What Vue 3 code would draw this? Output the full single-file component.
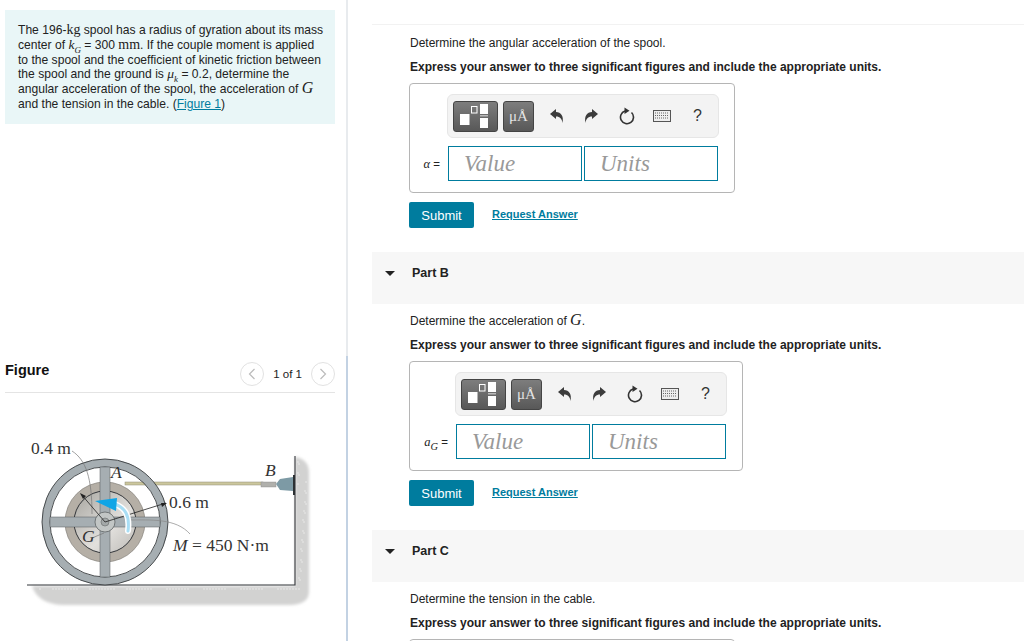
<template>
  <div class="page">
    <aside class="left">
      <div class="problem">
        <span class="line">The 196-<span class="cm">kg</span> spool has a radius of gyration about its mass</span>
        <span class="line">center of <i class="math">k<sub>G</sub></i> = 300 <span class="cm">mm</span>. If the couple moment is applied</span>
        <span class="line">to the spool and the coefficient of kinetic friction between</span>
        <span class="line">the spool and the ground is <i class="math">μ<sub>k</sub></i> = 0.2, determine the</span>
        <span class="line">angular acceleration of the spool, the acceleration of <i class="math big">G</i></span>
        <span class="line">and the tension in the cable. (<a class="figlink">Figure 1</a>)</span>
      </div>

      <div class="fig-head">
        <h3>Figure</h3>
        <div class="pager">
          <span class="circle">
            <svg width="8" height="12" viewBox="0 0 8 12"><path d="M6.500 1L1.500 6L6.500 11" fill="none" stroke="#bbb" stroke-width="1.200" /></svg>
          </span>
          <span class="count">1 of 1</span>
          <span class="circle">
            <svg width="8" height="12" viewBox="0 0 8 12"><path d="M1.500 1L6.500 6L1.500 11" fill="none" stroke="#bbb" stroke-width="1.200" /></svg>
          </span>
        </div>
      </div>

      <svg class="diagram" width="340" height="240" viewBox="0 401 340 240">
        <defs>
          <linearGradient id="hub" x1="0" y1="0" x2="1" y2="1">
            <stop offset="0" stop-color="#a5a39d" />
            <stop offset="0.6" stop-color="#e2e0dd" />
            <stop offset="1" stop-color="#bcbab6" />
          </linearGradient>
          <filter id="soft" x="-5%" y="-5%" width="110%" height="110%">
            <feGaussianBlur stdDeviation="1.500" />
          </filter>
        </defs>
        <path d="M32 586H295V457C303 458 309 463 309 472V592C309 600 302 605 290 605H62C46 604 36 598 32 586Z" fill="#d2d2d1" filter="url(#soft)" />
        <g fill="#f0f0f0">
          <circle v-for="d in speckles" :key="d[0] + '-' + d[1]" :cx="d[0]" :cy="d[1]" r="0.7" />
        </g>
        <path d="M27 585H295V456" fill="none" stroke="#33363a" stroke-width="1.100" />

        <rect x="125" y="482" width="138" height="3" fill="#cbc69c" stroke="#8f8d78" stroke-width="0.500" />
        <rect x="261" y="482" width="15" height="5" fill="#b0b0ac" stroke="#888" stroke-width="0.400" />
        <path d="M276 484L280 479L293 477V491L280 490Z" fill="#7d9aa5" />
        <path d="M293 475H295V495H293Z" fill="#2c3033" />

        <circle cx="105" cy="522" r="40" fill="#b5afa6" stroke="#77736d" stroke-width="0.600" />
        <circle cx="105" cy="522" r="31" fill="url(#hub)" stroke="#33363a" stroke-width="1" />
        <circle cx="105" cy="522" r="59" fill="none" stroke="#a6aeb2" stroke-width="8" />
        <circle cx="105" cy="522" r="63" fill="none" stroke="#3a3d40" stroke-width="0.900" />
        <circle cx="105" cy="522" r="55" fill="none" stroke="#3a3d40" stroke-width="0.900" />
        <rect x="100" y="467" width="10" height="110" fill="#a6aeb2" stroke="#55595b" stroke-width="0.500" />
        <rect x="50" y="517" width="110" height="10" fill="#a6aeb2" stroke="#55595b" stroke-width="0.500" />
        <circle cx="105" cy="522" r="10" fill="#c2c6c5" stroke="#55595a" stroke-width="0.700" />
        <circle cx="105" cy="522" r="4" fill="#a3a8a8" stroke="#66696a" stroke-width="0.600" />

        <path d="M72 451C86 460 92 478 92 514" fill="none" stroke="#777" stroke-width="0.700" />
        <path d="M105 522L81 494" stroke="#222" stroke-width="0.800" />
        <path d="M80 493L86 496L83 499Z" fill="#222" />
        <path d="M105 522L166 503" stroke="#222" stroke-width="0.800" />
        <path d="M167 503L161 503L162 507Z" fill="#222" />
        <path d="M129 520C150 520 176 518 190 534" fill="none" stroke="#888" stroke-width="0.700" />
        <path d="M92 538L104 533" stroke="#777" stroke-width="0.700" />
        <path d="M128 531C130 515 125 508 115 504" fill="none" stroke="#fff" stroke-width="6" stroke-linecap="round" />
        <path d="M128 531C130 515 125 508 115 504" fill="none" stroke="#a9def5" stroke-width="3" stroke-linecap="round" />
        <path d="M95 501L117 498L116 511Z" fill="#10a5e6" />

        <text x="31" y="454" class="fig-text">0.4 m</text>
        <text x="169" y="508" class="fig-text">0.6 m</text>
        <text x="173" y="551" class="fig-text"><tspan font-style="italic">M</tspan> = 450 N·m</text>
        <text x="111" y="478" class="fig-text it">A</text>
        <text x="265" y="476" class="fig-text it">B</text>
        <text x="82" y="542" class="fig-text it">G</text>
      </svg>
    </aside>

    <main class="right">
      <section v-for="part in parts" :key="part.id" class="part">
        <div v-if="part.title" class="part-head">
          <span class="caret"></span>
          <span class="part-title">{{ part.title }}</span>
        </div>
        <div class="part-body">
          <p class="question">
            {{ part.question }}<template v-if="part.mathG"><i class="math big">G</i>.</template>
          </p>
          <p class="express">Express your answer to three significant figures and include the appropriate units.</p>
          <div class="answer-box" :class="{ clipped: !part.label }">
            <template v-if="part.label">
              <div class="toolbar" :style="{ marginLeft: part.offset + 'px' }">
                <button class="tpl wide">
                  <svg width="43" height="29" viewBox="1 1 43 29">
                    <rect x="7" y="13" width="9.500" height="11" fill="#fff" />
                    <rect x="18.500" y="5.500" width="5.500" height="6.500" fill="none" stroke="#fff" stroke-width="1" />
                    <rect x="27" y="3" width="8" height="10" fill="#fff" />
                    <rect x="27" y="14" width="8" height="1.500" fill="#bbb" />
                    <rect x="27" y="17" width="8" height="10" fill="#fff" />
                  </svg>
                </button>
                <button class="tpl mu">μÅ</button>
                <svg class="ic undo" width="16" height="16" viewBox="0 0 16 16">
                  <path d="M1 6L7 1V4C12 4 15 8 13.500 15C13 11 11 8.500 7 8.500V11Z" fill="#3c3c3c" />
                </svg>
                <svg class="ic redo" width="16" height="16" viewBox="0 0 16 16">
                  <path d="M15 6L9 1V4C4 4 1 8 2.500 15C3 11 5 8.500 9 8.500V11Z" fill="#3c3c3c" />
                </svg>
                <svg class="ic reset" width="16" height="18" viewBox="0 0 16 18">
                  <path d="M12.500 5.500A6.500 6.500 0 1 1 6 4" fill="none" stroke="#333" stroke-width="1.600" />
                  <path d="M5.500 0.500L10.500 3.800L5.500 7Z" fill="#333" />
                </svg>
                <svg class="ic kbd" width="18" height="12" viewBox="0 0 18 12">
                  <rect x="0.500" y="0.500" width="17" height="11" fill="#eee" stroke="#555" />
                  <path d="M2 3H16M2 5.500H16M2 8H16" stroke="#666" stroke-width="1.200" stroke-dasharray="1 1" />
                </svg>
                <span class="help">?</span>
              </div>
              <div class="input-row" :style="{ marginLeft: part.offset - 37 + 'px' }">
                <span class="var"><i class="math" v-html="part.label"></i> =</span>
                <span class="field">Value</span>
                <span class="field">Units</span>
              </div>
            </template>
          </div>
          <div v-if="part.label" class="actions">
            <button class="submit">Submit</button>
            <a class="request">Request Answer</a>
          </div>
        </div>
      </section>
    </main>
  </div>
</template>

<script setup>
const parts = [
  { id: 'a', title: '', question: 'Determine the angular acceleration of the spool.', label: 'α', offset: 37 },
  { id: 'b', title: 'Part B', question: 'Determine the acceleration of ', mathG: true, label: 'a<sub>G</sub>', offset: 45 },
  { id: 'c', title: 'Part C', question: 'Determine the tension in the cable.', label: '', offset: 0 },
]

// grainy fill of the ground and the wall hatching
const speckles = []
for (let i = 0; i < 60; i++) {
  speckles.push([40 + ((i * 37) % 262), 589 + ((i * 13) % 13)])
}
for (let i = 0; i < 26; i++) {
  speckles.push([298 + ((i * 7) % 9), 462 + ((i * 29) % 125)])
}
</script>

<style scoped>
.page {
  display: flex;
  width: 1024px;
  height: 641px;
  overflow: hidden;
  background: #fff;
  font-family: 'Liberation Sans', Arial, sans-serif;
  color: #222;
}

.left {
  width: 348px;
  flex-shrink: 0;
  padding: 10px 0 0 5px;
  box-sizing: border-box;
  position: relative;
}

.left::after {
  content: '';
  position: absolute;
  right: 0;
  top: 0;
  bottom: 0;
  width: 2px;
  background: linear-gradient(#e8ebee 0, #e8ebee 356px, #c3d2e3 356px);
}

.problem {
  width: 330px;
  height: 114px;
  box-sizing: border-box;
  background: #e9f6f7;
  padding: 13px 8px 0 13px;
  font-size: 12.100px;
}

.line {
  display: block;
  height: 14.800px;
  line-height: 14.800px;
  white-space: nowrap;
}

.cm, .math {
  font-family: 'Liberation Serif', serif;
}

.cm {
  font-size: 14px;
  line-height: 0;
}

.math {
  font-style: italic;
  font-size: 13.500px;
  line-height: 0;
}

.math.big {
  font-size: 16px;
}

.math sub {
  font-size: 9px;
  line-height: 0;
}

.figlink {
  color: #007c9e;
  text-decoration: underline;
}

.fig-head {
  width: 330px;
  height: 39px;
  margin-top: 230px;
  display: flex;
  justify-content: space-between;
  align-items: center;
  box-sizing: border-box;
  border-bottom: 1px solid #e4e4e4;
}

.fig-head h3 {
  margin: -7px 0 0;
  font-size: 14.500px;
  font-weight: 700;
  color: #111;
}

.pager {
  display: flex;
  align-items: center;
  gap: 9px;
  font-size: 11.500px;
  margin-top: 2px;
}

.circle {
  width: 24px;
  height: 24px;
  box-sizing: border-box;
  border: 1px solid #e2e2e2;
  border-radius: 50%;
  display: flex;
  align-items: center;
  justify-content: center;
}

.diagram {
  display: block;
  margin: 8px 0 0 -5px;
}

.fig-text {
  font-family: 'Liberation Serif', serif;
  font-size: 17.500px;
  fill: #333;
}

.fig-text.it {
  font-style: italic;
}

.right {
  flex: 1;
  margin: 24px 0 0 24px;
  padding-top: 1px;
  border-top: 1px solid #f2f2f2;
  min-width: 0;
}

.part-head {
  height: 52px;
  background: #f7f7f7;
  display: flex;
  align-items: center;
  padding-bottom: 10px;
  box-sizing: border-box;
  margin-top: 24px;
}

.caret {
  width: 0;
  height: 0;
  margin-left: 13px;
  border-left: 5px solid transparent;
  border-right: 5px solid transparent;
  border-top: 5px solid #222;
}

.part-title {
  margin-left: 17px;
  font-size: 12.500px;
  font-weight: 700;
}

.part-body {
  padding-left: 37px;
}

.question {
  margin: 0;
  padding: 9px 0 0 1px;
  height: 30px;
  box-sizing: border-box;
  font-size: 12px;
  line-height: 17px;
}

.express {
  margin: 0 0 7px;
  height: 20px;
  padding: 3px 0 0 1px;
  box-sizing: border-box;
  font-size: 12.030px;
  line-height: 16px;
  font-weight: 700;
}

.answer-box {
  display: inline-block;
  vertical-align: top;
  height: 110px;
  border: 1px solid #b5b5b5;
  border-radius: 4px;
  box-sizing: border-box;
  padding: 10px 15px 0 0;
  width: max-content;
}

.answer-box.clipped {
  width: 326px;
}

.toolbar {
  width: 272px;
  height: 44px;
  box-sizing: border-box;
  background: #f3f3f3;
  border: 1px solid #e6e6e6;
  border-radius: 6px;
  display: flex;
  align-items: center;
  padding-left: 5px;
}

.tpl {
  height: 31px;
  padding: 0;
  border: 1px solid #444;
  border-radius: 3px;
  background: linear-gradient(#7d7d7d, #585858);
  display: flex;
  align-items: center;
  justify-content: center;
}

.tpl.wide {
  width: 45px;
}

.tpl.mu {
  width: 31px;
  margin-left: 5px;
  color: #e4e4e4;
  font-family: 'Liberation Serif', serif;
  font-size: 15px;
}

.ic {
  flex-shrink: 0;
}

.undo {
  margin-left: 15px;
}

.redo {
  margin-left: 18px;
}

.reset {
  margin-left: 20px;
}

.kbd {
  margin-left: 18px;
}

.help {
  margin-left: 22px;
  font-size: 16px;
  color: #333;
}

.input-row {
  display: flex;
  align-items: center;
  height: 35px;
  margin-top: 8px;
}

.var {
  width: 38px;
  padding-right: 8px;
  box-sizing: border-box;
  flex-shrink: 0;
  text-align: right;
  font-size: 11.500px;
  white-space: nowrap;
}

.var .math {
  font-size: 12.500px;
}

.field {
  width: 134px;
  height: 35px;
  box-sizing: border-box;
  border: 1px solid #007c9e;
  margin-right: 2px;
  padding-left: 15px;
  font-family: 'Liberation Serif', serif;
  font-style: italic;
  font-size: 23px;
  line-height: 33px;
  color: #999;
}

.field:last-child {
  margin-right: 0;
}

.actions {
  display: flex;
  align-items: center;
  margin-top: 9px;
}

.submit {
  width: 65px;
  height: 26px;
  padding: 0;
  border: 0;
  border-radius: 2px;
  background: #007c9e;
  color: #fff;
  font-family: 'Liberation Sans', Arial, sans-serif;
  font-size: 13px;
}

.request {
  margin-left: 18px;
  margin-top: -3px;
  color: #007c9e;
  font-size: 11px;
  font-weight: 700;
  text-decoration: underline;
}
</style>
